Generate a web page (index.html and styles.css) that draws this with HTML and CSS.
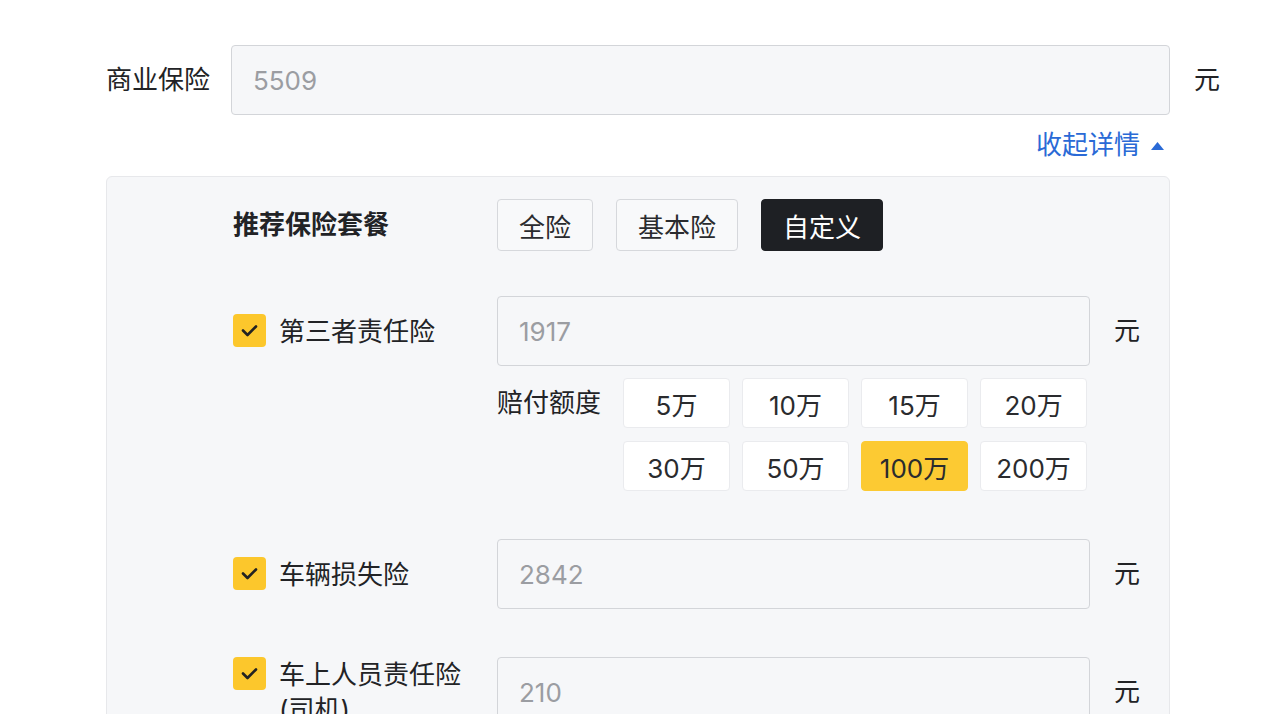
FILE: index.html
```html
<!DOCTYPE html>
<html lang="zh-CN">
<head>
<meta charset="utf-8">
<title>商业保险</title>
<link rel="stylesheet" href="styles.css">
</head>
<body>
<div class="page">
  <div class="top-row">
    <span class="top-label">商业保险</span>
    <div class="field top-field"><span class="val">5509</span></div>
    <span class="unit top-unit">元</span>
  </div>
  <div class="toggle">
    <a class="toggle-link">收起详情<svg class="tri" width="15" height="10" viewBox="0 0 15 10"><path d="M7.5 1 L14 9 L1 9 Z" fill="#2a6ad6"/></svg></a>
  </div>
  <section class="panel">
    <div class="pkg">
      <div class="pkg-title">推荐保险套餐</div>
      <div class="pkg-btns">
        <span class="chip">全险</span>
        <span class="chip">基本险</span>
        <span class="chip chip-active">自定义</span>
      </div>
    </div>
    <div class="items">
      <div class="item">
        <div class="item-label">
          <span class="check"><svg width="33" height="33" viewBox="0 0 33 33"><path d="M10 16.5 L14.5 21 L23 12.5" fill="none" stroke="#222" stroke-width="2.6" stroke-linecap="round" stroke-linejoin="round"/></svg></span>
          <span class="item-name">第三者责任险</span>
        </div>
        <div class="field"><span class="val">1917</span></div>
        <span class="unit">元</span>
        <div class="limits">
          <span class="limits-label">赔付额度</span>
          <div class="limit-grid">
            <span class="limit">5万</span>
            <span class="limit">10万</span>
            <span class="limit">15万</span>
            <span class="limit">20万</span>
            <span class="limit">30万</span>
            <span class="limit">50万</span>
            <span class="limit limit-active">100万</span>
            <span class="limit">200万</span>
          </div>
        </div>
      </div>
      <div class="item">
        <div class="item-label">
          <span class="check"><svg width="33" height="33" viewBox="0 0 33 33"><path d="M10 16.5 L14.5 21 L23 12.5" fill="none" stroke="#222" stroke-width="2.6" stroke-linecap="round" stroke-linejoin="round"/></svg></span>
          <span class="item-name">车辆损失险</span>
        </div>
        <div class="field"><span class="val">2842</span></div>
        <span class="unit">元</span>
      </div>
      <div class="item">
        <div class="item-label">
          <span class="check"><svg width="33" height="33" viewBox="0 0 33 33"><path d="M10 16.5 L14.5 21 L23 12.5" fill="none" stroke="#222" stroke-width="2.6" stroke-linecap="round" stroke-linejoin="round"/></svg></span>
          <span class="item-name">车上人员责任险(司机)</span>
        </div>
        <div class="field"><span class="val">210</span></div>
        <span class="unit">元</span>
      </div>
    </div>
  </section>
</div>
</body>
</html>
```
FILE: styles.css
```css
* { box-sizing: border-box; }
html, body { margin: 0; padding: 0; background: #ffffff; }
body {
  font-family: "Inter", "Noto Sans CJK SC", sans-serif;
  font-size: 26px;
  color: #222326;
}
.page {
  padding: 45px 0 40px 106px;
  width: 1270px;
}
.top-row {
  display: flex;
  align-items: center;
  height: 70px;
}
.top-label {
  width: 125px;
  line-height: 36px;
}
.field {
  height: 70px;
  border: 1.5px solid #d3d5d9;
  border-radius: 4px;
  background: #f6f7f9;
  display: flex;
  align-items: center;
  padding-left: 21px;
  color: #9b9da2;
}
.top-field { width: 939px; }
.unit { line-height: 36px; }
.top-unit { margin-left: 24px; }
.toggle {
  width: 1064px;
  text-align: right;
  margin-top: 12px;
  padding-right: 5px;
  line-height: 36px;
  height: 36px;
}
.toggle-link {
  color: #2a6ad6;
  display: inline-flex;
  align-items: center;
  gap: 10px;
}
.tri { margin-top: 1px; }
.panel {
  margin-top: 13px;
  width: 1064px;
  background: #f6f7f9;
  border: 1px solid #e7e8eb;
  border-radius: 6px;
  padding: 22px 32px 60px 126px;
}
.pkg {
  display: flex;
  align-items: center;
}
.pkg-title {
  width: 264px;
  font-weight: 700;
  line-height: 36px;
}
.pkg-btns {
  display: flex;
  gap: 23px;
}
.chip {
  height: 52px;
  padding: 0 21px;
  border: 1.5px solid #d6d8dc;
  border-radius: 4px;
  background: #f8f9fa;
  display: flex;
  align-items: center;
  color: #2a2b2e;
}
.chip-active {
  background: #1e2024;
  border-color: #1e2024;
  color: #ffffff;
}
.items {
  margin-top: 45px;
  display: flex;
  flex-direction: column;
  gap: 48px;
}
.item {
  display: grid;
  grid-template-columns: 264px 593px auto;
  align-items: center;
}
.item-label {
  display: flex;
  align-items: flex-start;
  gap: 13px;
}
.check {
  width: 33px;
  height: 33px;
  flex: none;
  border-radius: 4px;
  background: #fcc72c;
  display: block;
}
.check svg { display: block; }
.item-name {
  width: 200px;
  line-height: 35px;
}
.item .unit { margin-left: 24px; }
.limits {
  grid-column: 2 / 3;
  margin-top: 12px;
  display: flex;
  align-items: flex-start;
}
.limits-label {
  line-height: 50px;
  margin-right: 22px;
  white-space: nowrap;
}
.limit-grid {
  display: grid;
  grid-template-columns: repeat(4, 107px);
  grid-auto-rows: 50px;
  column-gap: 12px;
  row-gap: 13px;
}
.limit {
  background: #ffffff;
  border: 1px solid #eaebee;
  border-radius: 4px;
  display: flex;
  align-items: center;
  justify-content: center;
  color: #2a2b2e;
}
.limit-active {
  background: #fcca33;
  border-color: #fcca33;
}
```
